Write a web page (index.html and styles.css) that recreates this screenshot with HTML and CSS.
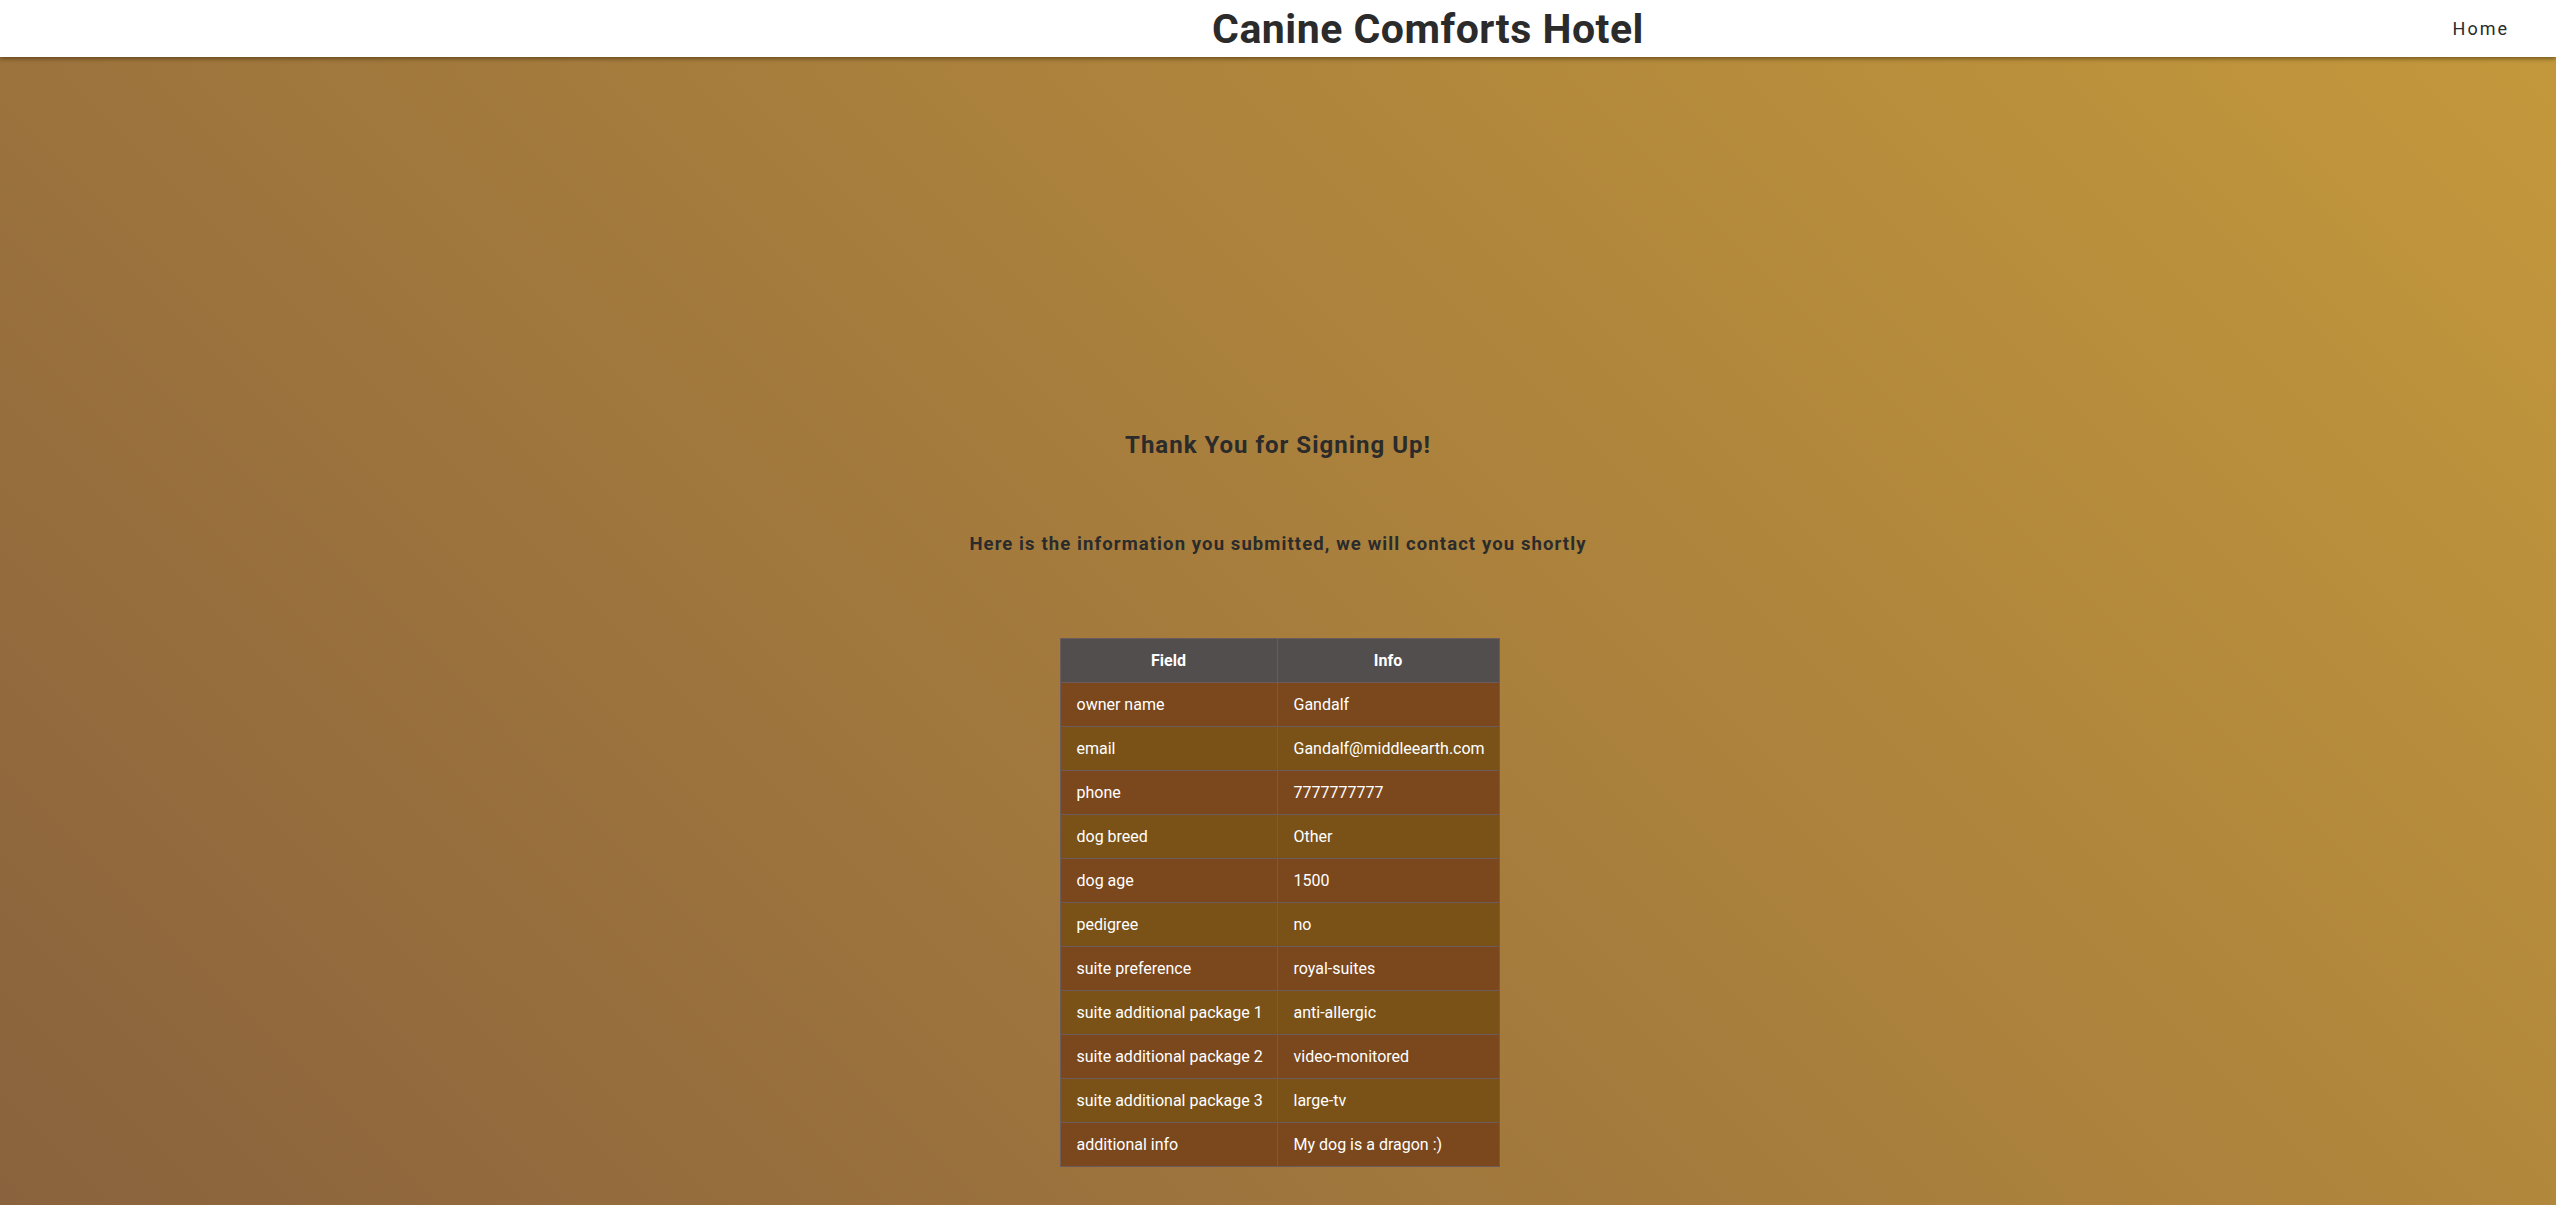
FILE: index.html
```html
<!DOCTYPE html>
<html lang="en">
<head>
<meta charset="utf-8">
<title>Canine Comforts Hotel</title>
<link rel="stylesheet" href="styles.css">
</head>
<body>
<header class="site-header">
  <h1 class="site-title">Canine Comforts Hotel</h1>
  <nav class="site-nav"><a class="nav-link" href="#">Home</a></nav>
</header>
<main class="content">
  <h2 class="thanks">Thank You for Signing Up!</h2>
  <p class="lead">Here is the information you submitted, we will contact you shortly</p>
  <table class="info-table">
    <thead>
      <tr><th>Field</th><th>Info</th></tr>
    </thead>
    <tbody>
      <tr><td>owner name</td><td>Gandalf</td></tr>
      <tr><td>email</td><td>Gandalf@middleearth.com</td></tr>
      <tr><td>phone</td><td>7777777777</td></tr>
      <tr><td>dog breed</td><td>Other</td></tr>
      <tr><td>dog age</td><td>1500</td></tr>
      <tr><td>pedigree</td><td>no</td></tr>
      <tr><td>suite preference</td><td>royal-suites</td></tr>
      <tr><td>suite additional package 1</td><td>anti-allergic</td></tr>
      <tr><td>suite additional package 2</td><td>video-monitored</td></tr>
      <tr><td>suite additional package 3</td><td>large-tv</td></tr>
      <tr><td>additional info</td><td>My dog is a dragon :)</td></tr>
    </tbody>
  </table>
</main>
</body>
</html>
```

FILE: styles.css
```css
* { box-sizing: border-box; }
html, body {
  margin: 0;
  height: 100%;
}
body {
  font-family: Roboto, "Liberation Sans", Arial, sans-serif;
  color: #2b2b2b;
  background: linear-gradient(45deg, #8a623d 0%, #c4993c 100%);
  min-height: 1205px;
  overflow: hidden;
}
.site-header {
  position: relative;
  z-index: 2;
  height: 57px;
  background: #ffffff;
  box-shadow: 0 2px 4px rgba(60, 40, 10, 0.55);
  display: flex;
  align-items: center;
  justify-content: center;
  padding-left: 300px;
}
.site-title {
  margin: 0;
  font-size: 41px;
  font-weight: 700;
  letter-spacing: 0.5px;
  color: #2b2b2b;
}
.site-nav {
  position: absolute;
  right: 47px;
  top: 0;
  height: 57px;
  display: flex;
  align-items: center;
}
.nav-link {
  color: #2b2b2b;
  text-decoration: none;
  font-size: 18px;
  letter-spacing: 2px;
}
.content {
  display: flex;
  flex-direction: column;
  align-items: center;
  padding-top: 374px;
}
.thanks {
  margin: 0;
  font-size: 24px;
  line-height: 28px;
  font-weight: 700;
  letter-spacing: 1px;
}
.lead {
  margin: 73px 0 0 0;
  font-size: 18.5px;
  line-height: 24px;
  font-weight: 700;
  letter-spacing: 1.1px;
}
.info-table {
  margin: 82px 0 0 3px;
  border-collapse: collapse;
  table-layout: fixed;
  width: 440px;
  color: #ffffff;
  font-size: 16px;
}
.info-table th,
.info-table td {
  border: 1px solid #6d5a5a;
  height: 44px;
  padding: 0 6px 0 16px;
  white-space: nowrap;
}
.info-table th {
  background: #524e4e;
  font-weight: 700;
  text-align: center;
  padding: 0;
}
.info-table th:first-child,
.info-table td:first-child {
  width: 217px;
}
.info-table td {
  text-align: left;
}
.info-table tbody tr:nth-child(odd) td { background: #7b471d; }
.info-table tbody tr:nth-child(even) td { background: #7a5217; }
```
